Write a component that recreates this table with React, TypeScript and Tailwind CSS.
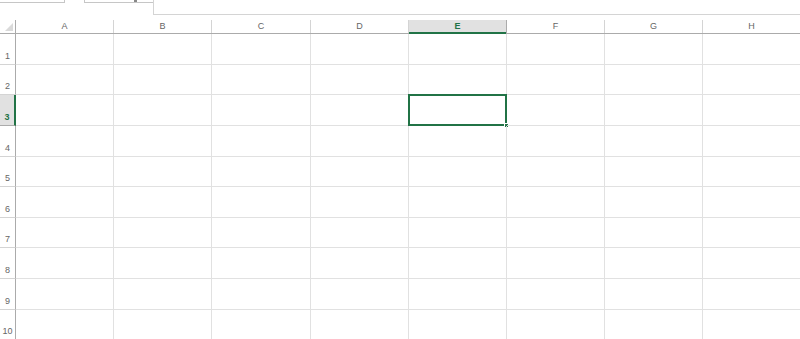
// 스프레드시트 빈 시트 — 헤더 + 10행, E3 선택 상태.

const COLS = ['A', 'B', 'C', 'D', 'E', 'F', 'G', 'H']
// 열 폭 98.3px 근사 — C만 1px 넓게.
const COL_W: Record<string, string> = {
  A: 'w-[98px]', B: 'w-[98px]', C: 'w-[99px]', D: 'w-[98px]',
  E: 'w-[98px]', F: 'w-[98px]', G: 'w-[98px]', H: 'w-[98px]',
}
const ROW_H = ['h-[31px]', 'h-[30px]', 'h-[31px]', 'h-[31px]', 'h-[30px]', 'h-[31px]', 'h-[30px]', 'h-[31px]', 'h-[31px]', 'h-[30px]']
const SEL_COL = 'E'
const SEL_ROW = 3

function TopStrip() {
  return (
    <div className="flex h-5 items-start">
      <div className="h-[3px] w-[65px] shrink-0 border-b border-r border-[#c6c6c6]" />
      <div className="ml-[19px] flex h-[3px] w-[69px] shrink-0 justify-end border-b border-l border-[#c6c6c6] pr-[16px]">
        <span className="h-[2px] w-[3px] bg-[#888]" />
      </div>
      <div className="h-[15px] flex-1 border-b border-l border-[#d4d4d4]" />
    </div>
  )
}

function HeaderRow() {
  return (
    <div className="flex h-[14px] border-b border-[#ababab]">
      <div className="relative w-[16px] shrink-0 border-r border-[#ababab]">
        <svg className="absolute bottom-[2px] right-[2px]" width="8" height="8" viewBox="0 0 8 8">
          <path d="M8 0 L8 8 L0 8 Z" fill="#dadada" />
        </svg>
      </div>
      {COLS.map(c => {
        const sel = c === SEL_COL
        return (
          <div
            key={c}
            className={
              sel
                ? `relative flex ${COL_W[c]} shrink-0 items-center justify-center border-r border-[#ababab] bg-[#e1e1e1] text-[9px] font-bold text-[#217346]`
                : `flex ${COL_W[c]} shrink-0 items-center justify-center border-r border-[#d4d4d4] text-[9px] text-[#666]`
            }
          >
            {c}
            {sel && <span className="absolute -bottom-px left-0 right-0 h-[2px] bg-[#217346]" />}
          </div>
        )
      })}
    </div>
  )
}

function Row({ n, h }: { n: number; h: string }) {
  const selRow = n === SEL_ROW
  return (
    <div className={`flex ${h}`}>
      <div
        className={
          selRow
            ? 'flex w-[16px] shrink-0 items-end justify-center border-b border-r-2 border-b-[#ababab] border-r-[#217346] bg-[#e1e1e1] pb-[1px] text-[9px] font-bold text-[#217346]'
            : 'flex w-[16px] shrink-0 items-end justify-center border-b border-r border-b-[#d4d4d4] border-r-[#ababab] pb-[1px] text-[9px] text-[#666]'
        }
      >
        {n}
      </div>
      {COLS.map(c => (
        <div key={c} className={`relative ${COL_W[c]} shrink-0 border-b border-r border-[#e1e1e1]`}>
          {selRow && c === SEL_COL && (
            <>
              <div className="absolute -left-px -top-px bottom-[-1px] right-[-1px] border-2 border-[#217346]" />
              <div className="absolute bottom-[-3px] right-[-3px] h-[5px] w-[5px] border border-white bg-[#217346]" />
            </>
          )}
        </div>
      ))}
    </div>
  )
}

export default function App() {
  return (
    <div className="h-[339px] w-[800px] overflow-hidden bg-white" style={{ fontFamily: '"Liberation Sans", Arial, sans-serif' }}>
      <TopStrip />
      <HeaderRow />
      {ROW_H.map((h, i) => (
        <Row key={i} n={i + 1} h={h} />
      ))}
    </div>
  )
}
